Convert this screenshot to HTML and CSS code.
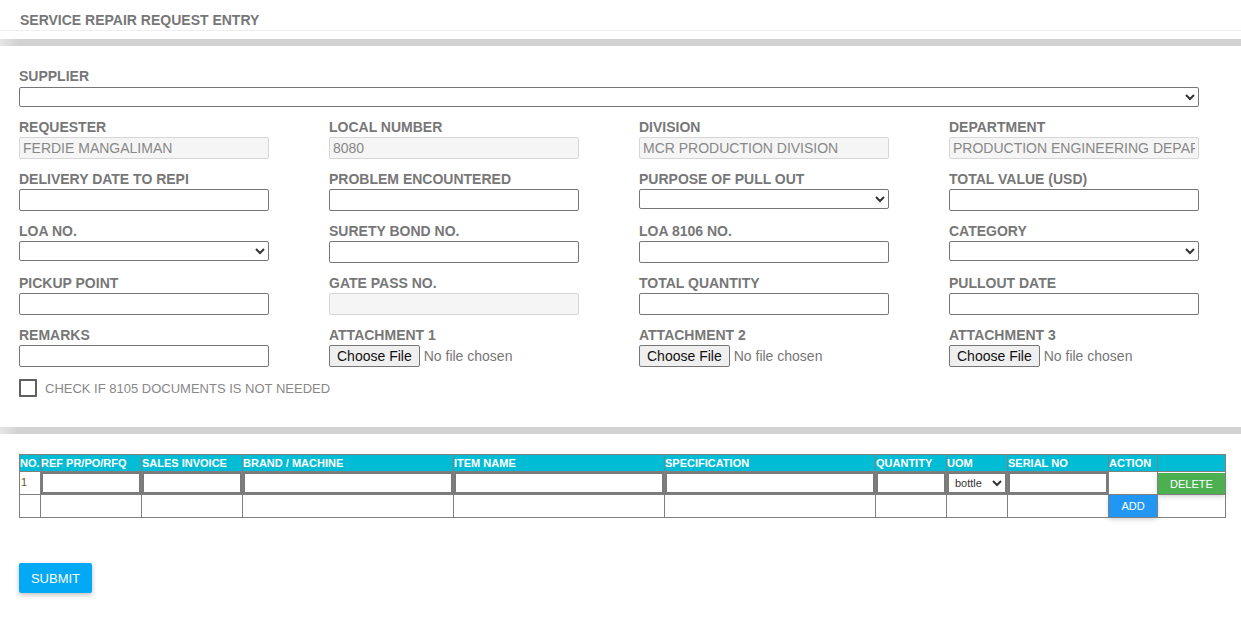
FILE: index.html
```html
<!DOCTYPE html>
<html>
<head>
<meta charset="utf-8">
<title>Service Repair Request Entry</title>
<link rel="stylesheet" href="styles.css">
</head>
<body>
<div class="title">SERVICE REPAIR REQUEST ENTRY</div>
<div class="bar bar-top"></div>
<section class="form">
  <div class="field-full">
    <label class="lbl">SUPPLIER</label>
    <select class="sel sel-full"><option></option></select>
  </div>
  <div class="grid">
    <div class="field"><label class="lbl">REQUESTER</label><input class="inp inp-dis" value="FERDIE MANGALIMAN" disabled></div>
    <div class="field"><label class="lbl">LOCAL NUMBER</label><input class="inp inp-dis" value="8080" disabled></div>
    <div class="field"><label class="lbl">DIVISION</label><input class="inp inp-dis" value="MCR PRODUCTION DIVISION" disabled></div>
    <div class="field"><label class="lbl">DEPARTMENT</label><input class="inp inp-dis" value="PRODUCTION ENGINEERING DEPARTMENT" disabled></div>

    <div class="field"><label class="lbl">DELIVERY DATE TO REPI</label><input class="inp"></div>
    <div class="field"><label class="lbl">PROBLEM ENCOUNTERED</label><input class="inp"></div>
    <div class="field"><label class="lbl">PURPOSE OF PULL OUT</label><select class="sel"><option></option></select></div>
    <div class="field"><label class="lbl">TOTAL VALUE (USD)</label><input class="inp"></div>

    <div class="field"><label class="lbl">LOA NO.</label><select class="sel"><option></option></select></div>
    <div class="field"><label class="lbl">SURETY BOND NO.</label><input class="inp"></div>
    <div class="field"><label class="lbl">LOA 8106 NO.</label><input class="inp"></div>
    <div class="field"><label class="lbl">CATEGORY</label><select class="sel"><option></option></select></div>

    <div class="field"><label class="lbl">PICKUP POINT</label><input class="inp"></div>
    <div class="field"><label class="lbl">GATE PASS NO.</label><input class="inp inp-dis" disabled></div>
    <div class="field"><label class="lbl">TOTAL QUANTITY</label><input class="inp"></div>
    <div class="field"><label class="lbl">PULLOUT DATE</label><input class="inp"></div>

    <div class="field"><label class="lbl">REMARKS</label><input class="inp"></div>
    <div class="field"><label class="lbl">ATTACHMENT 1</label><input class="file" type="file"></div>
    <div class="field"><label class="lbl">ATTACHMENT 2</label><input class="file" type="file"></div>
    <div class="field"><label class="lbl">ATTACHMENT 3</label><input class="file" type="file"></div>
  </div>
  <div class="check">
    <span class="box"></span>
    <span class="check-text">CHECK IF 8105 DOCUMENTS IS NOT NEEDED</span>
  </div>
</section>
<div class="bar bar-mid"></div>
<section class="items">
  <table class="tbl">
    <colgroup>
      <col class="c-no"><col class="c-ref"><col class="c-si"><col class="c-brand"><col class="c-item"><col class="c-spec"><col class="c-qty"><col class="c-uom"><col class="c-serial"><col class="c-action"><col class="c-last">
    </colgroup>
    <thead>
      <tr class="hrow">
        <th>NO.</th><th>REF PR/PO/RFQ</th><th>SALES INVOICE</th><th>BRAND / MACHINE</th><th>ITEM NAME</th><th>SPECIFICATION</th><th>QUANTITY</th><th>UOM</th><th>SERIAL NO</th><th>ACTION</th><th></th>
      </tr>
    </thead>
    <tbody>
      <tr class="drow">
        <td class="num">1</td>
        <td><input class="cell-inp"></td>
        <td><input class="cell-inp"></td>
        <td><input class="cell-inp"></td>
        <td><input class="cell-inp"></td>
        <td><input class="cell-inp"></td>
        <td><input class="cell-inp"></td>
        <td><select class="cell-sel"><option>bottle</option></select></td>
        <td><input class="cell-inp"></td>
        <td></td>
        <td class="del-cell"><button class="btn-del">DELETE</button></td>
      </tr>
      <tr class="drow">
        <td></td><td></td><td></td><td></td><td></td><td></td><td></td><td></td><td></td>
        <td class="add-cell"><button class="btn-add">ADD</button></td>
        <td></td>
      </tr>
    </tbody>
  </table>
  <button class="btn-submit">SUBMIT</button>
</section>
</body>
</html>
```
FILE: styles.css
```css
html, body {
  margin: 0;
  padding: 0;
  background: #fff;
  font-family: "Liberation Sans", Arial, sans-serif;
}

.title {
  height: 16px;
  padding: 12px 20px 2px;
  font-size: 14px;
  line-height: 16px;
  font-weight: bold;
  color: #777;
  border-bottom: 1px solid #eeeeee;
}

.bar {
  height: 7px;
  background: linear-gradient(to right, #e6e6e6 0px, #d2d2d2 18px, #d2d2d2 100%);
}
.bar-top { margin-top: 8px; }

.form {
  padding: 22px 0 30px 19px;
}

.lbl {
  display: block;
  height: 17px;
  line-height: 17px;
  margin-bottom: 1px;
  font-size: 14px;
  font-weight: bold;
  color: #777;
}

.field-full .lbl { margin-bottom: 2px; }

.sel {
  display: block;
  box-sizing: border-box;
  width: 250px;
  height: 20px;
  margin: 0;
  padding: 0 2px;
  border: 1px solid #767676;
  border-radius: 2px;
  background: #fff;
  font-family: "Liberation Sans", Arial, sans-serif;
  font-size: 13px;
  color: #333;
}
.sel-full { width: 1180px; }
.field-full { margin-bottom: 12px; }

.grid {
  display: grid;
  grid-template-columns: repeat(4, 250px);
  column-gap: 60px;
  row-gap: 12px;
}

.field { height: 40px; }
.field .sel { margin-top: 1px; }

.inp {
  display: block;
  box-sizing: border-box;
  width: 250px;
  height: 22px;
  margin: 0;
  padding: 1px 3px;
  border: 1px solid #767676;
  border-radius: 2px;
  background: #fff;
  font-family: "Liberation Sans", Arial, sans-serif;
  font-size: 14px;
  color: #888;
}
.inp-dis {
  background: #f5f5f5;
  border-color: #d6d6d6;
  color: #888;
}

.file {
  display: block;
  height: 22px;
  margin: 0;
  padding: 0;
  font-family: "Liberation Sans", Arial, sans-serif;
  font-size: 14px;
  color: #777;
}
.file::file-selector-button {
  font-family: "Liberation Sans", Arial, sans-serif;
  font-size: 14px;
  color: #111;
  height: 22px;
  margin: 0 4px 0 0;
  padding: 0 7px;
  border: 1px solid #767676;
  border-radius: 2px;
  background: #efefef;
}

.check {
  display: flex;
  align-items: center;
  gap: 8px;
  margin-top: 12px;
  height: 18px;
}
.box {
  box-sizing: border-box;
  width: 18px;
  height: 18px;
  border: 2px solid #5f5f5f;
  border-radius: 1px;
}
.check-text {
  font-size: 13px;
  color: #888;
}

.items {
  padding: 20px 0 40px 19px;
}

.tbl {
  table-layout: fixed;
  border-collapse: collapse;
  width: 1207px;
  font-family: "Liberation Sans", Arial, sans-serif;
}
.c-no { width: 21px; }
.c-ref { width: 101px; }
.c-si { width: 101px; }
.c-brand { width: 211px; }
.c-item { width: 211px; }
.c-spec { width: 211px; }
.c-qty { width: 71px; }
.c-uom { width: 61px; }
.c-serial { width: 101px; }
.c-action { width: 49px; }
.c-last { width: 68px; }

.tbl th, .tbl td {
  border: 1px solid #808080;
  padding: 0;
}
.hrow th {
  height: 16px;
  background: #00bcd4;
  color: #fff;
  font-size: 11px;
  font-weight: bold;
  text-align: left;
  line-height: 14px;
  white-space: nowrap;
  overflow: hidden;
}
.drow td {
  height: 22px;
  vertical-align: top;
}
.num {
  font-size: 11px;
  color: #6b5a1e;
  padding-left: 1px !important;
  line-height: 20px;
}

.cell-inp {
  display: block;
  box-sizing: border-box;
  width: 100%;
  height: 22px;
  margin: 0;
  border: 2px solid #7a7a7a;
  background: #fff;
}
.cell-sel {
  display: block;
  box-sizing: border-box;
  width: 100%;
  height: 22px;
  margin: 0;
  padding: 0 2px;
  border: 2px solid #7a7a7a;
  background: #fff;
  font-family: "Liberation Sans", Arial, sans-serif;
  font-size: 11px;
  color: #333;
}

.del-cell { overflow: visible; }
.btn-del {
  display: block;
  width: 67px;
  height: 21px;
  margin: 1px 0 0 0;
  border: none;
  background: #4caf50;
  color: #fff;
  font-family: "Liberation Sans", Arial, sans-serif;
  font-size: 11px;
  box-shadow: 0 2px 5px rgba(0, 0, 0, 0.22);
  cursor: pointer;
}
.btn-add {
  display: block;
  width: 100%;
  height: 22px;
  margin: 0;
  border: none;
  background: #2196f3;
  color: #fff;
  font-family: "Liberation Sans", Arial, sans-serif;
  font-size: 11px;
  box-shadow: 0 2px 5px rgba(0, 0, 0, 0.22);
}

.btn-submit {
  display: block;
  margin-top: 45px;
  width: 73px;
  height: 30px;
  border: none;
  border-radius: 2px;
  background: #03a9f4;
  color: #fff;
  font-family: "Liberation Sans", Arial, sans-serif;
  font-size: 13px;
  box-shadow: 0 2px 5px rgba(0, 0, 0, 0.25);
}
```
